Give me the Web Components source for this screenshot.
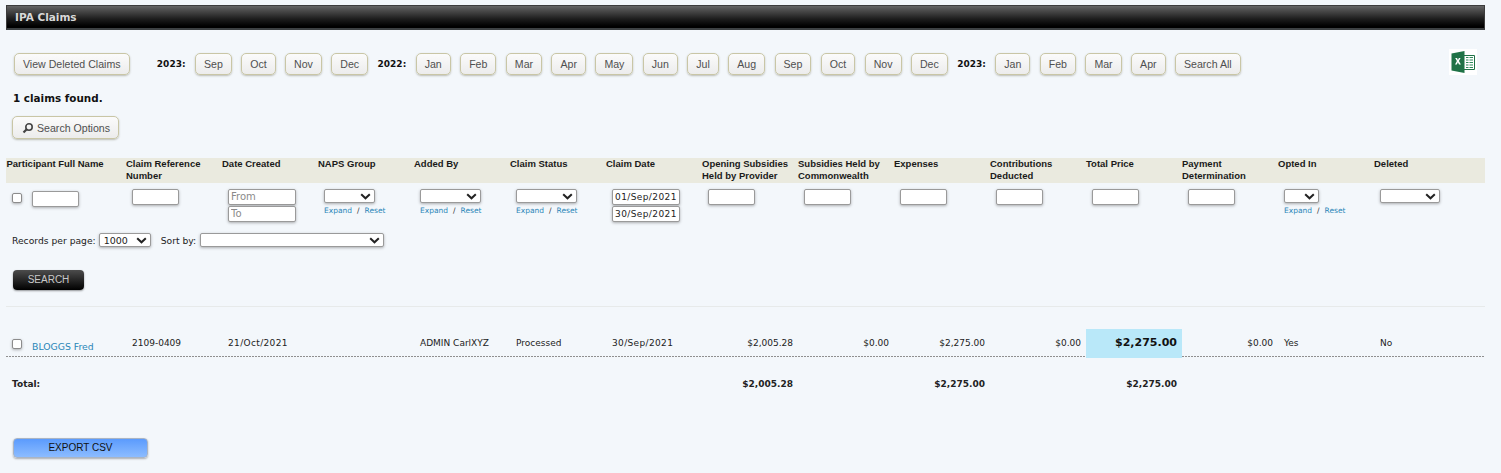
<!DOCTYPE html>
<html lang="en"><head><meta charset="utf-8"><title>IPA Claims</title>
<style>
html,body{margin:0;padding:0;background:#f3f7fb;overflow:hidden}
body{font:9px "DejaVu Sans",sans-serif;color:#111;height:473px}
</style></head><body>
<ipa-page></ipa-page>
<script>
const def=(name,css,html)=>customElements.define(name,class extends HTMLElement{
  connectedCallback(){ if(this.shadowRoot) return; const r=this.attachShadow({mode:'open'});
    r.innerHTML='<style>'+css+'</style>'+(typeof html==='function'?html(this):html); }
});
const chev='<svg width="11" height="7" viewBox="0 0 11 7"><path d="M1.2 1.2 5.5 5.3 9.8 1.2" fill="none" stroke="#222" stroke-width="2"/></svg>';

def('title-bar',`:host{display:block;margin:5px 16px 0 6px;height:25px;box-sizing:border-box;
  background:linear-gradient(#666 0,#555 12%,#1c1c1c 60%,#000 92%);border:1px solid #3c3c3c;border-bottom:2px solid #3d4143;
  color:#d8d8d8;font:bold 10.5px/23px "DejaVu Sans",sans-serif;padding-left:8px}`,'<slot></slot>');

def('pill-btn',`:host{display:inline-flex;align-items:center;gap:3px;box-sizing:border-box;height:22px;padding:0 8px;
  border:1px solid #c9c6a6;border-radius:5px;background:linear-gradient(#fbfbfb,#ececec);box-shadow:0 1px 2px rgba(120,120,100,.45);
  font:10.6px "Liberation Sans",sans-serif;color:#4f4f4f;white-space:nowrap}`,'<slot></slot>');

def('year-label',`:host{display:inline-block;font:bold 9px "DejaVu Sans",sans-serif;color:#111;white-space:nowrap}`,'<slot></slot>');

def('excel-icon',`:host{display:block;width:28px;height:26px;background:#fff;margin-left:auto}svg{display:block}`,
 `<svg width="28" height="26" viewBox="0 0 28 26">
  <path d="M14 6.5h11.5v14H14z" fill="#fff" stroke="#1f7246" stroke-width="1"/>
  <path d="M17 8.500h7M17 11h7M17 13.500h7M17 16h7M17 18.500h7" stroke="#2f8a5a" stroke-width="1.2"/>
  <path d="M20 7v13" stroke="#fff" stroke-width="1"/>
  <path d="M2.500 4.500 15.500 2v22l-13-2.500z" fill="#1f7246"/>
  <path d="M6.200 9l1.700 3-1.900 3.400h1.800l1.100-2.200 1.100 2.200h1.900l-2-3.400L11.600 9H9.900l-.95 1.900L8 9z" fill="#fff"/></svg>`);

def('month-bar',`:host{display:flex;align-items:center;margin:21px 24px 0 14px;height:26px}
  .row{display:flex;align-items:center;gap:9.42px}
  .sp{width:8.5px}
  excel-icon{margin-top:-4px}`,
 ()=>{const b=t=>`<pill-btn>${t}</pill-btn>`,y=t=>`<year-label>${t}</year-label>`;
  return `<div class="row">${b('View Deleted Claims')}<span class="sp"></span>${y('2023:')}${['Sep','Oct','Nov','Dec'].map(b).join('')}${y('2022:')}${['Jan','Feb','Mar','Apr','May','Jun','Jul','Aug','Sep','Oct','Nov','Dec'].map(b).join('')}${y('2023:')}${['Jan','Feb','Mar','Apr'].map(b).join('')}${b('Search All')}</div><excel-icon></excel-icon>`});

def('found-count',`:host{display:block;margin:13px 0 0 13px;font:bold 10.4px/16px "DejaVu Sans",sans-serif;color:#111}`,'<slot></slot>');

def('search-options',`:host{display:block;margin:10px 0 0 12px}pill-btn{height:23px;padding:0 8px 0 9px}svg{display:block}`,
 `<pill-btn><svg width="12" height="12" viewBox="0 0 12 12"><circle cx="7" cy="5" r="3.200" fill="none" stroke="#444" stroke-width="1.600"/><path d="M4.700 7.300 1.500 10.500" stroke="#444" stroke-width="2.200"/></svg>Search Options</pill-btn>`);

def('text-box',`:host{display:block}input{display:block;box-sizing:border-box;width:var(--w,47px);height:var(--h,16px);margin:0;padding:0 2px;border:1px solid #9a9a9a;border-radius:2px;background:#fff;box-shadow:0 1px 3px rgba(0,0,0,.3);font:9px "DejaVu Sans",sans-serif;letter-spacing:.4px;color:#222;outline:0}
 input::placeholder{color:#8a8a8a;opacity:1;font-size:10px;letter-spacing:0}`,
 h=>`<input type="text" aria-label="${h.getAttribute('label')||'filter'}" value="${h.getAttribute('value')||''}" placeholder="${h.getAttribute('placeholder')||''}">`);

def('drop-box',`:host{display:block;width:var(--w,51px);height:var(--h,14px)}
 div{box-sizing:border-box;height:100%;display:flex;align-items:center;justify-content:space-between;padding:0 3px 0 4px;border:1px solid #9a9a9a;border-radius:2px;background:#fff;box-shadow:0 1px 3px rgba(0,0,0,.3);font:9.5px "DejaVu Sans",sans-serif;color:#222}`,
 h=>`<div><span>${h.getAttribute('value')||''}</span>${chev}</div>`);

def('tick-box',`:host{display:block;width:10px;height:10px}input{display:block;appearance:none;box-sizing:border-box;width:10px;height:10px;margin:0;border:1px solid #8c8c8c;border-radius:2px;background:#fff;box-shadow:0 1px 3px rgba(0,0,0,.3)}`,'<input type="checkbox" aria-label="select">');

def('drop-filter',`:host{display:block;padding:6px 0 0 6px}
 .l{display:flex;gap:5px;margin-top:2px;font:7.5px/12px "DejaVu Sans",sans-serif;color:#2a86b8;white-space:nowrap}
 .s{color:#333}`,
 h=>`<drop-box style="--w:${h.getAttribute('w')}px"></drop-box>${h.hasAttribute('links')?'<div class="l"><span>Expand</span><span class="s">/</span><span>Reset</span></div>':''}`);

def('claims-table',`:host{display:block;margin:19px 16px 0 6px}
 .g{display:grid;grid-template-columns:120px repeat(13,96px) 1fr}
 .h{background:#eaeadf;height:25px;font:bold 9.5px/12px "Liberation Sans",sans-serif;color:#1a1a1a;box-sizing:border-box}
 .h>div:first-child{padding-left:0.5px;white-space:nowrap}
 .f{height:39px}
 .f>div{min-width:0}
 .tb{padding:6px 0 0 6px}
 .first{display:flex;align-items:flex-start;gap:10px;padding:8px 0 0 6px}
 .first tick-box{margin-top:2px}
 .dates{padding:6px 0 0 6px;display:flex;flex-direction:column;gap:1px}
 .rec{display:flex;align-items:center;height:14px;margin:11px 0 0 6px;font:9.2px "DejaVu Sans",sans-serif;color:#222}
 .rec .a{margin:0 10px 0 3px}.rec .b{margin-right:4px}
 .sw{margin:23px 0 0 7px}
 .search{display:inline-block;width:71px;height:20px;box-sizing:border-box;border-radius:4px;background:linear-gradient(#4c4c4c,#2a2a2a 45%,#000);box-shadow:0 1px 2px rgba(0,0,0,.4);text-align:center;font:10px/19px "Liberation Sans",sans-serif;color:#c9c9c9}
 hr{margin:16px 0 0;border:0;border-top:1px solid #e7eaea;height:0}
 .d{margin-top:22px;height:28px;font:9px "DejaVu Sans",sans-serif;color:#222;position:relative}
 .d>div{line-height:28px;white-space:nowrap}
 .line{height:1px;margin-top:-1px;background:repeating-linear-gradient(90deg,#8f8f8f 0 2px,transparent 2px 3px)}
 .d>div.t{padding-left:6px}.d>div.r{text-align:right;padding-right:5px}
 .d>div.dt{padding-left:6px;letter-spacing:.35px}
 .d .name{color:#2a86b8;display:flex;align-items:flex-start;gap:10px;padding:10px 0 0 6px;line-height:14px;font-size:9.3px}
 .d .name span{margin-top:1px}
 .d .hi{background:#b9e8f9;font:bold 11px/27px "DejaVu Sans",sans-serif;color:#111;text-align:right;padding-right:5px;height:29px;position:relative;z-index:1}
 .tot{margin-top:20px;font:bold 9px/14px "DejaVu Sans",sans-serif;color:#222;white-space:nowrap}
 .tot>div{text-align:right;padding-right:5px}.tot>div.l{text-align:left;padding:0 0 0 6px}
 .exp{display:block;margin:47px 0 0 7px;width:135px;height:20px;box-sizing:border-box;border:1px solid #a9b4c4;border-radius:4px;background:linear-gradient(#5b9bfd,#8cbcff);box-shadow:0 1px 2px rgba(0,0,0,.3);text-align:center;font:10px/17px "Liberation Sans",sans-serif;color:#111}
 `,
 ()=>{
  const heads=['Participant Full Name','Claim Reference Number','Date Created','NAPS Group','Added By','Claim Status','Claim Date','Opening Subsidies Held by Provider','Subsidies Held by Commonwealth','Expenses','Contributions Deducted','Total Price','Payment Determination','Opted In','Deleted'];
  const tb=`<div class="tb"><text-box></text-box></div>`;
  return `<div class="g h">${heads.map(t=>`<div>${t}</div>`).join('')}</div>
  <div class="g f">
   <div class="first"><tick-box></tick-box><text-box></text-box></div>${tb}
   <div class="dates"><text-box style="--w:68px" placeholder="From"></text-box><text-box style="--w:68px" placeholder="To"></text-box></div>
   <drop-filter w="51" links></drop-filter><drop-filter w="61" links></drop-filter><drop-filter w="61" links></drop-filter>
   <div class="dates"><text-box style="--w:68px" value="01/Sep/2021"></text-box><text-box style="--w:68px" value="30/Sep/2021"></text-box></div>
   ${tb}${tb}${tb}${tb}${tb}${tb}
   <drop-filter w="35" links></drop-filter><drop-filter w="60"></drop-filter>
  </div>
  <div class="rec"><span>Records per page:</span><drop-box class="a" style="--w:52px" value="1000"></drop-box><span class="b">Sort by:</span><drop-box style="--w:184px"></drop-box></div>
  <div class="sw"><span class="search">SEARCH</span></div>
  <hr>
  <div class="g d">
   <div class="name"><tick-box></tick-box><span>BLOGGS Fred</span></div>
   <div class="t">2109-0409</div><div class="dt">21/Oct/2021</div><div></div><div class="t">ADMIN CarlXYZ</div><div class="t">Processed</div><div class="dt">30/Sep/2021</div>
   <div class="r">$2,005.28</div><div class="r">$0.00</div><div class="r">$2,275.00</div><div class="r">$0.00</div>
   <div class="hi">$2,275.00</div><div class="r">$0.00</div><div class="t">Yes</div><div class="t">No</div>
  </div>
  <div class="line"></div>
  <div class="g tot"><div class="l">Total:</div><div></div><div></div><div></div><div></div><div></div><div></div>
   <div>$2,005.28</div><div></div><div>$2,275.00</div><div></div><div>$2,275.00</div></div>
  <span class="exp">EXPORT CSV</span>`;
 });

def('ipa-page',`:host{display:block}`,`<title-bar>IPA Claims</title-bar><month-bar></month-bar><found-count>1 claims found.</found-count><search-options></search-options><claims-table></claims-table>`);
</script>
</body></html>
